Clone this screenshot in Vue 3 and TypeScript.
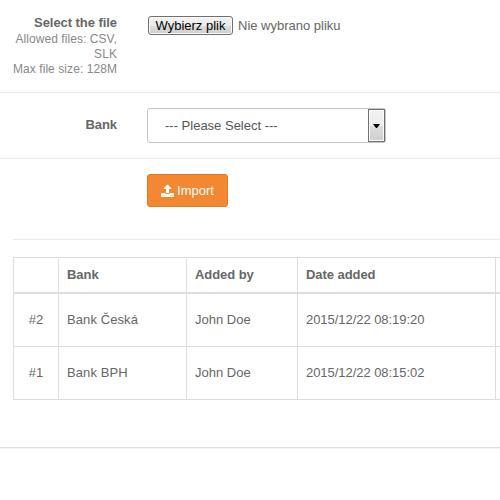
<script setup lang="ts">
interface ImportRow {
  id: number
  bank: string
  author: string
  date: string
}

const headings: string[] = ['', 'Bank', 'Added by', 'Date added', '']
const rows: ImportRow[] = [
  { id: 2, bank: 'Bank Česká', author: 'John Doe', date: '2015/12/22 08:19:20' },
  { id: 1, bank: 'Bank BPH', author: 'John Doe', date: '2015/12/22 08:15:02' },
]
</script>

<template>
  <main class="page">
    <section class="field file-field">
      <div class="label">
        <strong class="title">Select the file</strong>
        <span class="hint">Allowed files: CSV, SLK<br />Max file size: 128M</span>
      </div>
      <div class="file">
        <button class="file-button" type="button">Wybierz plik</button>
        <span>Nie wybrano pliku</span>
      </div>
    </section>

    <section class="field bank-field">
      <div class="label"><strong class="title">Bank</strong></div>
      <div class="select">
        <span class="select-value">--- Please Select ---</span>
        <span class="select-arrow">
          <svg width="7" height="4" viewBox="0 0 7 4"><path d="M0 0h7L4 4H3z" fill="#000" /></svg>
        </span>
      </div>
    </section>

    <section class="actions">
      <button class="import" type="button">
        <svg class="icon" width="13" height="14" viewBox="0 -1536 1664 1792">
          <path
            transform="scale(1,-1)"
            fill="#fff"
            d="M1664 288v-320q0-40-28-68t-68-28h-1472q-40 0-68 28t-28 68v320q0 40 28 68t68 28h427q21-56 70.500-92t110.500-36h256q61 0 110.500 36t70.500 92h427q40 0 68-28t28-68zM1339 936q-17-40-59-40h-256v-448q0-26-19-45t-45-19h-256q-26 0-45 19t-19 45v448h-256q-42 0-59 40-17 39 14 69l448 448q18 19 45 19t45-19l448-448q31-30 14-69z"
          />
          <path transform="scale(1,-1)" fill="#f9b27c" d="M1216 0h128v128h-128zM1472 0h128v128h-128z" />
        </svg>
        <span>Import</span>
      </button>
    </section>

    <section class="history">
      <div class="grid head">
        <div v-for="(heading, i) in headings" :key="i" class="cell">{{ heading }}</div>
      </div>
      <div v-for="row in rows" :key="row.id" class="grid row">
        <div class="cell number">#{{ row.id }}</div>
        <div class="cell bank">{{ row.bank }}</div>
        <div class="cell">{{ row.author }}</div>
        <div class="cell date">{{ row.date }}</div>
        <div class="cell"></div>
      </div>
    </section>
  </main>
</template>

<style>
body {
  background: #fff;
}
</style>

<style scoped>
.page {
  box-sizing: border-box;
  width: 500px;
  height: 449px;
  overflow: hidden;
  border-bottom: 1px solid #f4f4f4;
  box-shadow: inset 0 -1px #dfdfdf;
  color: #666;
  font: 13px/18px "Liberation Sans", Arial, sans-serif;
}
.field {
  box-sizing: border-box;
  display: flex;
  align-items: flex-start;
  gap: 30px;
  border-bottom: 1px solid #e9e9e9;
}
.file-field {
  height: 93px;
  padding-top: 15px;
}
.bank-field {
  height: 66px;
  padding-top: 15px;
}
.label {
  width: 117px;
  box-sizing: border-box;
  padding-left: 10px;
  text-align: right;
  flex: none;
}
.title {
  display: block;
  line-height: 16px;
  letter-spacing: -0.06px;
}
.bank-field .title {
  padding-top: 9px;
}
.hint {
  display: block;
  padding-top: 1px;
  color: #888;
  font-size: 12px;
  line-height: 15px;
  letter-spacing: 0.07px;
}
.file {
  display: flex;
  align-items: center;
  gap: 5px;
  padding-left: 1px;
  padding-top: 1px;
}
.file-button {
  box-sizing: border-box;
  width: 85px;
  height: 19px;
  padding: 0;
  border: 1px solid #707070;
  border-radius: 3px;
  background: linear-gradient(#f2f2f2 0%, #ebebeb 50%, #dddddd 51%, #cfcfcf 100%);
  box-shadow: inset 0 0 0 1px #fbfbfb;
  color: #000;
  font: 13px/17px "Liberation Sans", Arial, sans-serif;
  white-space: nowrap;
}
.select {
  box-sizing: border-box;
  display: flex;
  width: 239px;
  height: 35px;
  border: 1px solid #c4c4c4;
  border-radius: 3px;
  color: #555;
}
.select-value {
  flex: 1;
  padding-left: 17px;
  line-height: 33px;
}
.select-arrow {
  box-sizing: border-box;
  display: flex;
  align-items: center;
  justify-content: center;
  width: 17px;
  height: 33px;
  border: 1px solid #707070;
  background: linear-gradient(#f2f2f2, #ebebeb 50%, #dddddd 51%, #cfcfcf);
  box-shadow: inset 0 0 0 1px #fbfbfb;
}
.actions {
  box-sizing: border-box;
  height: 80px;
  padding: 15px 0 0 147px;
}
.import {
  box-sizing: border-box;
  display: flex;
  align-items: center;
  justify-content: center;
  gap: 3px;
  width: 81px;
  height: 33px;
  padding: 0;
  border: 1px solid #e37a24;
  border-radius: 3px;
  background: #f48732;
  color: #fff;
  font: 13px/18px "Liberation Sans", Arial, sans-serif;
}
.history {
  margin-left: 13px;
  padding-top: 17px;
  border-top: 1px solid #e9e9e9;
}
.grid {
  display: grid;
  grid-template-columns: 45px 128px 111px 198px 1fr;
  border-bottom: 1px solid #ddd;
}
.head {
  border-top: 1px solid #ddd;
  border-bottom-width: 2px;
  font-weight: bold;
}
.cell {
  padding-left: 8px;
  border-left: 1px solid #ddd;
  line-height: 52px;
  height: 52px;
  white-space: nowrap;
}
.head .cell {
  height: 34px;
  line-height: 34px;
  letter-spacing: -0.06px;
}
.bank {
  letter-spacing: 0.09px;
}
.date {
  letter-spacing: -0.05px;
}
.number {
  padding-left: 0;
  text-align: center;
}
</style>
